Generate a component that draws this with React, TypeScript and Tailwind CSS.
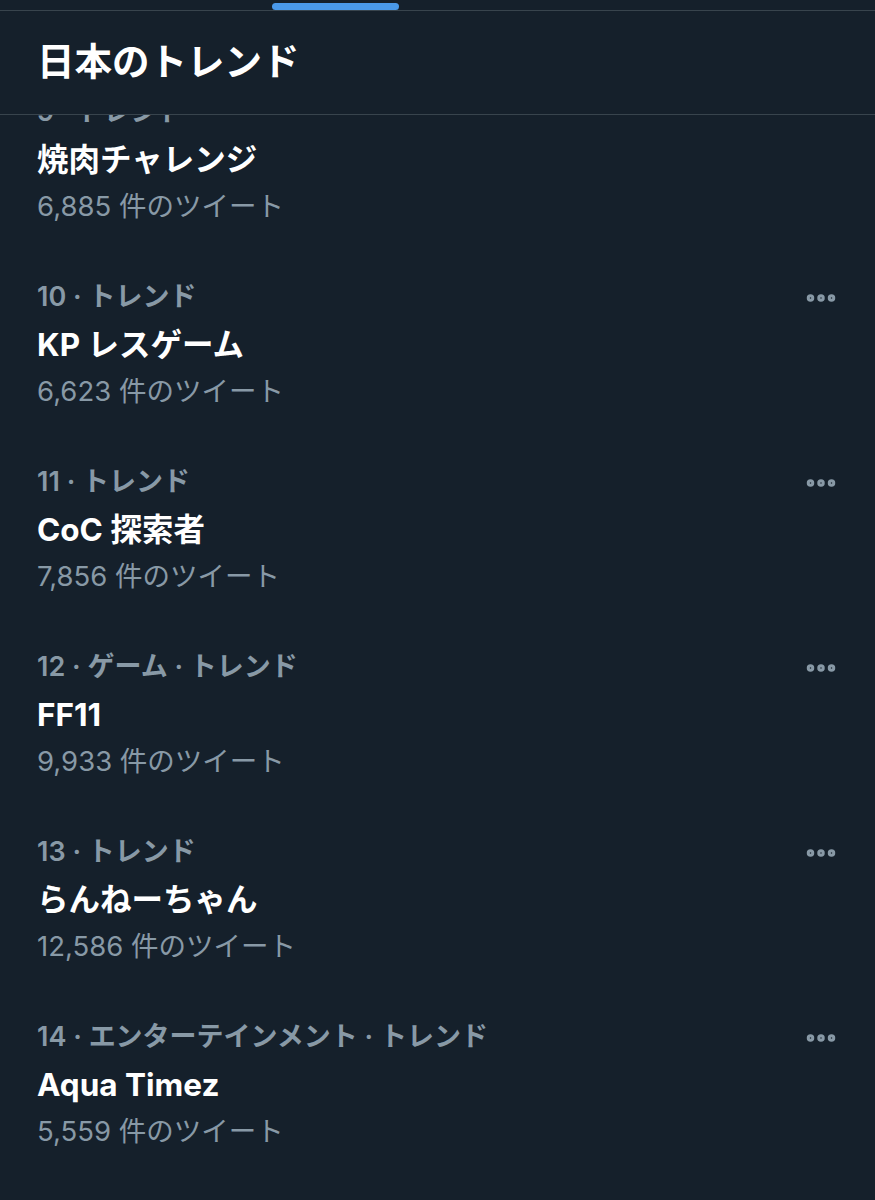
import { MoreHorizontal } from 'lucide-react';

type Trend = { rank: number; category: string; title: string; count: string };

const trends: Trend[] = [
  { rank: 9, category: 'トレンド', title: '焼肉チャレンジ', count: '6,885' },
  { rank: 10, category: 'トレンド', title: 'KP レスゲーム', count: '6,623' },
  { rank: 11, category: 'トレンド', title: 'CoC 探索者', count: '7,856' },
  { rank: 12, category: 'ゲーム · トレンド', title: 'FF11', count: '9,933' },
  { rank: 13, category: 'トレンド', title: 'らんねーちゃん', count: '12,586' },
  { rank: 14, category: 'エンターテインメント · トレンド', title: 'Aqua Timez', count: '5,559' },
];

function TrendRow({ t }: { t: Trend }) {
  return (
    <div className="flex items-start justify-between pl-[37px] pr-[36px] pt-[22px] pb-[22px]">
      <div className="flex flex-col">
        <div className="h-[47px] flex items-center text-[27px] font-semibold text-[#8899a6]">
          {t.rank} · {t.category}
        </div>
        <div className="h-[47px] flex items-center text-[31.5px] font-bold text-white">{t.title}</div>
        <div className="h-[47px] flex items-center text-[27.5px] text-[#8899a6]">{t.count} 件のツイート</div>
      </div>
      {t.rank !== 9 && (
        <div className="h-[47px] flex items-center text-[#8899a6]">
          <MoreHorizontal size={36} strokeWidth={3} />
        </div>
      )}
    </div>
  );
}

export default function App() {
  return (
    <div
      className="relative w-[875px] h-[1200px] overflow-hidden bg-[#15202b]"
      style={{ fontFamily: 'Inter, "Noto Sans CJK JP", sans-serif' }}
    >
      <div className="relative z-10 bg-[#15202b]">
        <div className="h-[11px] border-b border-[#38444d] relative">
          <div className="absolute left-[272px] top-[3px] w-[127px] h-[7px] rounded-full bg-[#4a99e9]" />
        </div>
        <div className="h-[104px] flex items-center pl-[37px] border-b border-[#38444d]">
          <h1 className="text-[37.5px] font-bold text-white">日本のトレンド</h1>
        </div>
      </div>
      <div className="-mt-[48px]">
        {trends.map(t => (
          <TrendRow key={t.rank} t={t} />
        ))}
      </div>
    </div>
  );
}
